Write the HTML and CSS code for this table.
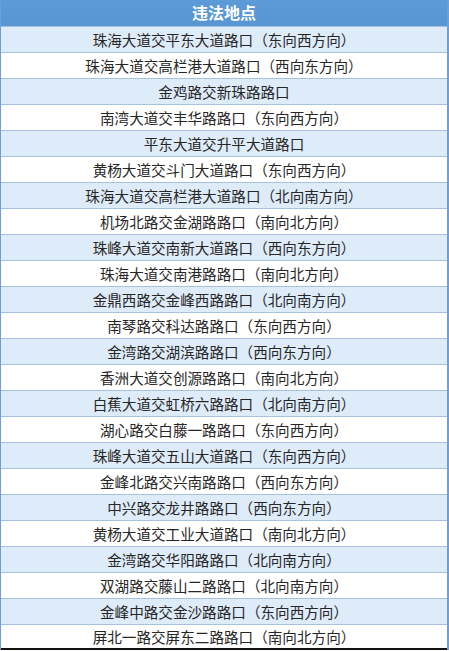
FILE: index.html
```html
<!DOCTYPE html>
<html lang="zh">
<head>
<meta charset="utf-8">
<link rel="stylesheet" href="styles.css">
</head>
<body>
<div class="table">
  <div class="head">违法地点</div>
  <div class="row odd">珠海大道交平东大道路口（东向西方向）</div>
  <div class="row">珠海大道交高栏港大道路口（西向东方向）</div>
  <div class="row odd">金鸡路交新珠路路口</div>
  <div class="row">南湾大道交丰华路路口（东向西方向）</div>
  <div class="row odd">平东大道交升平大道路口</div>
  <div class="row">黄杨大道交斗门大道路口（东向西方向）</div>
  <div class="row odd">珠海大道交高栏港大道路口（北向南方向）</div>
  <div class="row">机场北路交金湖路路口（南向北方向）</div>
  <div class="row odd">珠峰大道交南新大道路口（西向东方向）</div>
  <div class="row">珠海大道交南港路路口（南向北方向）</div>
  <div class="row odd">金鼎西路交金峰西路路口（北向南方向）</div>
  <div class="row">南琴路交科达路路口（东向西方向）</div>
  <div class="row odd">金湾路交湖滨路路口（西向东方向）</div>
  <div class="row">香洲大道交创源路路口（南向北方向）</div>
  <div class="row odd">白蕉大道交虹桥六路路口（北向南方向）</div>
  <div class="row">湖心路交白藤一路路口（东向西方向）</div>
  <div class="row odd">珠峰大道交五山大道路口（东向西方向）</div>
  <div class="row">金峰北路交兴南路路口（西向东方向）</div>
  <div class="row odd">中兴路交龙井路路口（西向东方向）</div>
  <div class="row">黄杨大道交工业大道路口（南向北方向）</div>
  <div class="row odd">金湾路交华阳路路口（北向南方向）</div>
  <div class="row">双湖路交藤山二路路口（北向南方向）</div>
  <div class="row odd">金峰中路交金沙路路口（东向西方向）</div>
  <div class="row last">屏北一路交屏东二路路口（南向北方向）</div>
</div>
</body>
</html>
```

FILE: styles.css
```css
html, body {
  margin: 0;
  padding: 0;
  background: #ffffff;
}
.table {
  width: 446px;
  border-left: 1px solid #6b9fd6;
  border-right: 2px solid #6b9fd6;
  display: flex;
  flex-direction: column;
  font-family: "Noto Sans CJK SC", "Noto Sans", sans-serif;
}
.head {
  height: 26px;
  line-height: 25px;
  background: linear-gradient(#5c9bd8, #5896d3);
  color: #ffffff;
  font-size: 16px;
  font-weight: bold;
  text-align: center;
}
.row {
  height: 25px;
  line-height: 25px;
  border-top: 1px solid #a8c2de;
  background: #ffffff;
  color: #262626;
  font-size: 14.6px;
  text-align: center;
}
.row.odd {
  background: #deebf8;
}
.row.last {
  height: 23px;
  line-height: 23px;
  border-bottom: 2px solid #111111;
}
```
